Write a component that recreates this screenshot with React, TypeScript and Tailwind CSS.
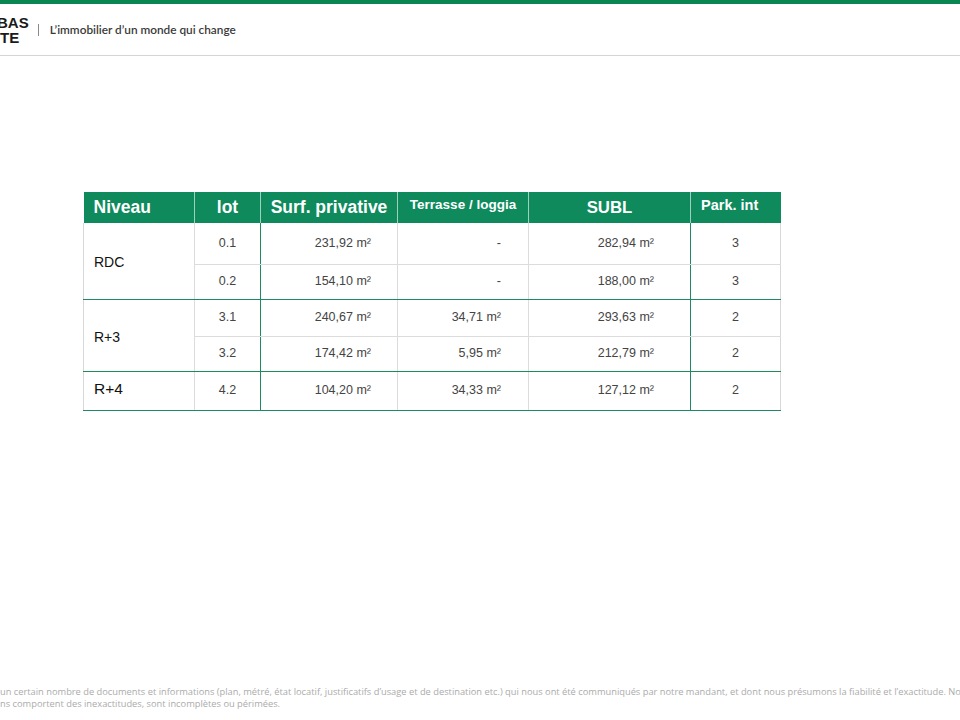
const green = "border-[#1d8a5f]";

type Row = { lot: string; surf: string; terr: string; subl: string; park: string; h: string };
type Group = { niveau: string; big?: boolean; rows: Row[] };

const groups: Group[] = [
  {
    niveau: "RDC",
    rows: [
      { lot: "0.1", surf: "231,92 m²", terr: "-", subl: "282,94 m²", park: "3", h: "h-[41px]" },
      { lot: "0.2", surf: "154,10 m²", terr: "-", subl: "188,00 m²", park: "3", h: "h-[35px]" },
    ],
  },
  {
    niveau: "R+3",
    rows: [
      { lot: "3.1", surf: "240,67 m²", terr: "34,71 m²", subl: "293,63 m²", park: "2", h: "h-[37px]" },
      { lot: "3.2", surf: "174,42 m²", terr: "5,95 m²", subl: "212,79 m²", park: "2", h: "h-[35px]" },
    ],
  },
  {
    niveau: "R+4",
    big: true,
    rows: [{ lot: "4.2", surf: "104,20 m²", terr: "34,33 m²", subl: "127,12 m²", park: "2", h: "h-[39px]" }],
  },
];

function Header() {
  return (
    <header className="flex h-[52px] items-center overflow-hidden border-b border-[#d4d4d4]">
      <div className="flex flex-col pt-[1px] text-[15px] font-bold leading-[15px] text-[#1a1a1a]">
        <span className="ml-[-3px]">BAS</span>
        <span>TE</span>
      </div>
      <div className="ml-[9px] h-[12px] w-px bg-[#8a8a8a]" />
      <div className="ml-[11px] text-[11.8px] font-semibold text-[#3a3a3a]" style={{ fontFamily: "Lato, sans-serif" }}>
        L’immobilier d’un monde qui change
      </div>
    </header>
  );
}

function Table() {
  const th = "border-x border-white/60 bg-[#0e8a5d] font-bold text-white";
  const td = "text-[12.5px] text-[#444]";
  return (
    <table className="ml-[83px] mt-[136px] table-fixed border-collapse" style={{ fontFamily: "'Liberation Sans', Arial, sans-serif" }}>
      <colgroup>
        <col className="w-[111px]" />
        <col className="w-[66px]" />
        <col className="w-[137px]" />
        <col className="w-[131px]" />
        <col className="w-[162px]" />
        <col className="w-[90px]" />
      </colgroup>
      <thead>
        <tr className="h-[31px]">
          <th className={`${th} border-l-0 pl-[10px] text-left text-[17.5px]`}>Niveau</th>
          <th className={`${th} text-center text-[17.5px]`}>lot</th>
          <th className={`${th} text-center text-[17.5px]`}>Surf. privative</th>
          <th className={`${th} pb-[4px] text-center text-[13.5px]`}>Terrasse / loggia</th>
          <th className={`${th} text-center text-[16.8px]`}>SUBL</th>
          <th className={`${th} border-r-0 pb-[3px] pl-[10px] text-left text-[14.5px]`}>Park. int</th>
        </tr>
      </thead>
      <tbody>
        {groups.map((g) =>
          g.rows.map((r, i) => {
            const last = i === g.rows.length - 1;
            const bb = last ? `border-b ${green}` : "border-b border-[#dcdcdc]";
            return (
              <tr key={r.lot} className={r.h}>
                {i === 0 ? (
                  <td
                    rowSpan={g.rows.length}
                    className={`border-b border-l border-b-[#1d8a5f] border-l-[#d8d8d8] pl-[10px] ${g.big ? "pb-[4px] text-[15.5px]" : "pt-[4px] text-[14px]"} text-[#111]`}
                  >
                    {g.niveau}
                  </td>
                ) : null}
                <td className={`${td} ${bb} border-l border-l-[#dcdcdc] border-r border-r-[#1d8a5f] text-center`}>{r.lot}</td>
                <td className={`${td} ${bb} border-r border-r-[#dcdcdc] pr-[26px] text-right`}>{r.surf}</td>
                <td className={`${td} ${bb} border-r border-r-[#dcdcdc] pr-[27px] text-right`}>{r.terr}</td>
                <td className={`${td} ${bb} border-r border-r-[#1d8a5f] pr-[36px] text-right`}>{r.subl}</td>
                <td className={`${td} ${bb} border-r border-r-[#d8d8d8] text-center`}>{r.park}</td>
              </tr>
            );
          })
        )}
      </tbody>
    </table>
  );
}

export default function App() {
  return (
    <div className="relative h-[720px] w-[960px] overflow-hidden bg-white" style={{ fontFamily: "'Liberation Sans', Arial, sans-serif" }}>
      <div className="h-[4px] bg-[#0a8653]" />
      <Header />
      <Table />
      <footer
        className="absolute bottom-[10px] left-0 w-[960px] overflow-hidden whitespace-nowrap text-[9.3px] leading-[12px] text-[#ababab]"
        style={{ fontFamily: "'Open Sans', sans-serif" }}
      >
        <div>
          un certain nombre de documents et informations (plan, métré, état locatif, justificatifs d’usage et de destination etc.) qui nous ont été communiqués par notre mandant, et dont nous présumons la fiabilité et l’exactitude. Not
        </div>
        <div>ns comportent des inexactitudes, sont incomplètes ou périmées.</div>
      </footer>
    </div>
  );
}
